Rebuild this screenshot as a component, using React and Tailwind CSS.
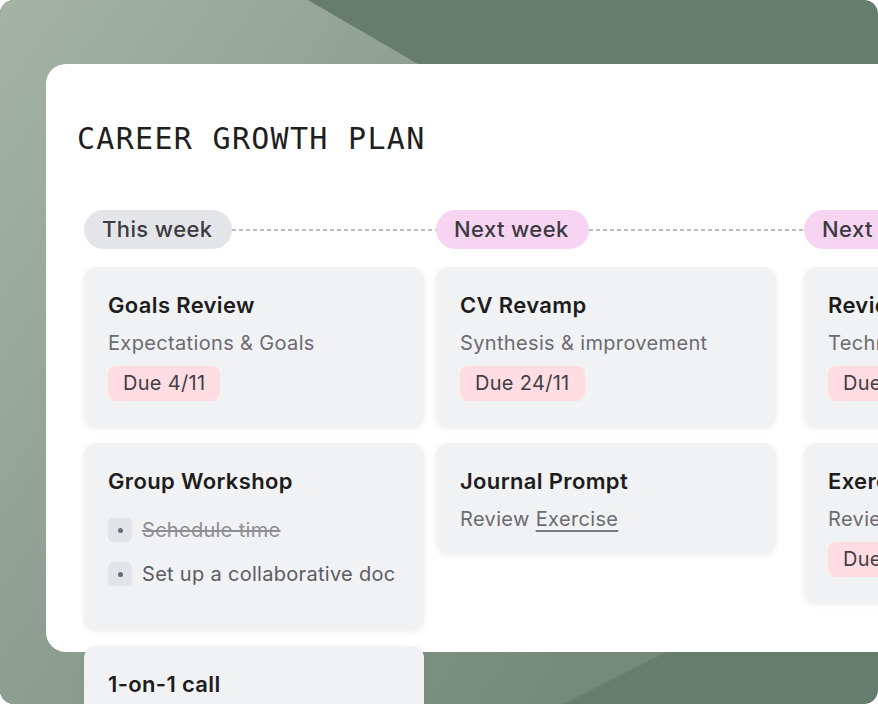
import React from "react";

const columns = [
  {
    label: "This week",
    pill: "bg-[#e4e5e9]",
    width: "w-[352px]",
    cards: [
      { title: "Goals Review", sub: "Expectations & Goals", due: "Due 4/11" },
      {
        title: "Group Workshop",
        todos: [
          { text: "Schedule time", done: true },
          { text: "Set up a collaborative doc", done: false },
        ],
      },
      { title: "1-on-1 call", sub: "Progress check-in" },
    ],
  },
  {
    label: "Next week",
    pill: "bg-[#f8d4f3]",
    width: "w-[368px]",
    cards: [
      { title: "CV Revamp", sub: "Synthesis & improvement", due: "Due 24/11" },
      { title: "Journal Prompt", sub: "Review", link: "Exercise" },
    ],
  },
  {
    label: "Next month",
    pill: "bg-[#f8d4f3]",
    width: "w-[352px]",
    cards: [
      { title: "Review Portfolio", sub: "Technical skills", due: "Due 1/12" },
      { title: "Exercise Recap", sub: "Review notes", due: "Due 8/12" },
    ],
  },
];

const Card = ({ card }) => {
  const bottom = card.due ? "pb-[26px]" : card.todos ? "pb-[44px]" : "pb-5";
  return (
    <div className={`w-[340px] rounded-xl bg-[#f1f2f4] px-6 pt-6 shadow-[0_2px_6px_rgba(0,0,0,0.07)] ${bottom}`}>
      <div className="text-[22px] leading-[28px] font-semibold tracking-[0.35px] text-[#1d1d20]">{card.title}</div>
      {card.sub && (
        <div className="mt-[10px] text-[20px] leading-[28px] tracking-[0.35px] text-[#6b6b73]">
          {card.sub}
          {card.link && (
            <>
              {" "}
              <span className="underline decoration-[#7a7a82] underline-offset-[4px]">{card.link}</span>
            </>
          )}
        </div>
      )}
      {card.due && (
        <div className="mt-[9px] inline-block rounded-lg bg-[#ffdde2] px-[15px] text-[20px] leading-[35px] tracking-[0.3px] text-[#3f3f46]">
          {card.due}
        </div>
      )}
      {card.todos && (
        <div className="mt-[23px] flex flex-col gap-5">
          {card.todos.map((t) => (
            <div key={t.text} className="flex items-center gap-[10px]">
              <span className="flex h-6 w-6 items-center justify-center rounded-[5px] bg-[#e3e4e8]">
                <span className="h-[5px] w-[5px] rounded-full bg-[#6b6b73]" />
              </span>
              <span
                className={`text-[20px] leading-6 tracking-[0.3px] ${
                  t.done ? "text-[#8e8e95] line-through decoration-[#8e8e95]" : "text-[#5c5c64]"
                }`}
              >
                {t.text}
              </span>
            </div>
          ))}
        </div>
      )}
    </div>
  );
};

export default function App() {
  return (
    <div
      className="relative h-[704px] w-[878px] overflow-hidden rounded-[14px] bg-[#667c6e]"
      style={{ fontFamily: "Inter, 'Noto Sans', sans-serif" }}
    >
      {/* background shape */}
      <svg className="absolute inset-0" width="878" height="704" viewBox="0 0 878 704">
        <defs>
          <linearGradient id="lg" gradientUnits="userSpaceOnUse" x1="0" y1="0" x2="700" y2="500">
            <stop offset="0" stopColor="#a4b3a6" />
            <stop offset="1" stopColor="#74897b" />
          </linearGradient>
        </defs>
        <polygon points="0,0 308,0 1076,447 563,704 0,704" fill="url(#lg)" />
      </svg>

      <div className="relative pl-[46px] pt-16">
        <div className="h-[588px] rounded-l-[20px] bg-white">
          <h1
            className="pl-[31px] pt-[57px] text-[30px] leading-[36px] font-normal tracking-[1.3px] text-[#1f1f22]"
            style={{ fontFamily: "'DejaVu Sans Mono', 'Liberation Mono', monospace" }}
          >
            CAREER GROWTH PLAN
          </h1>

          <div className="mt-[53px] flex pl-[38px]">
            {columns.map((col) => (
              <div key={col.label} className={`${col.width} shrink-0`}>
                <div className="flex items-center">
                  <span
                    className={`shrink-0 rounded-full ${col.pill} pl-[18px] pr-5 text-[22px] leading-[39px] font-medium tracking-[0.4px] text-[#3b3b40]`}
                  >
                    {col.label}
                  </span>
                  <span className="h-[2px] flex-1 bg-[repeating-linear-gradient(90deg,#b9bdbc_0_4px,transparent_4px_7px)]" />
                </div>
                <div className="mt-[18px] flex flex-col gap-4">
                  {col.cards.map((card) => (
                    <Card key={card.title} card={card} />
                  ))}
                </div>
              </div>
            ))}
          </div>
        </div>
      </div>
    </div>
  );
}
